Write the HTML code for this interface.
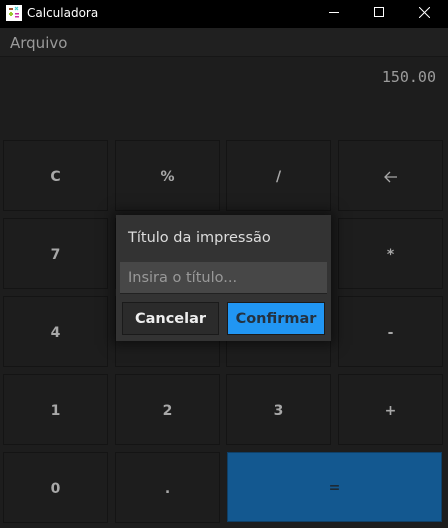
<!DOCTYPE html>
<html><head><style>
*{margin:0;padding:0;box-sizing:border-box}
body{width:448px;height:528px;background:#1d1d1d;font-family:"DejaVu Sans","Liberation Sans",sans-serif;position:relative;overflow:hidden}
.tb{position:absolute;left:0;top:0;width:448px;height:28px;background:#000;color:#fff;font-size:12px}
.menu{position:absolute;top:28px;left:0;width:448px;height:29px;background:#202020;border-bottom:1px solid #161616;color:#9a9a9a;font-size:15px;padding:6px 10px}
.disp{position:absolute;right:12px;top:68px;color:#9c9c9c;font-family:"DejaVu Sans Mono","Liberation Mono",monospace;font-size:15px}
.b{position:absolute;width:105px;height:71px;background:#1d1d1d;border:1px solid #141414;color:#a8a8a8;font-weight:bold;font-size:14px;display:flex;align-items:center;justify-content:center;padding-top:2px}
.dlg{position:absolute;left:116px;top:215px;width:215px;height:126px;background:#333;box-shadow:0 0 12px 4px rgba(0,0,0,.5)}
</style></head><body>
<div class="tb">
<svg style="position:absolute;left:6px;top:5px" width="16" height="16"><rect width="16" height="16" fill="#fff"/><rect x="3" y="3" width="4" height="2" fill="#a0522d"/><path d="M9 2l3 3M12 2l-3 3" stroke="#4cc" stroke-width="1.2"/><path d="M3 9h4M5 7v4" stroke="#9c3" stroke-width="2"/><rect x="9" y="8" width="4" height="1.5" fill="#c3a"/><rect x="9" y="11" width="4" height="1.5" fill="#c3a"/></svg>
<span style="position:absolute;left:27px;top:6px">Calculadora</span>
<div style="position:absolute;left:329px;top:12px;width:10px;height:1px;background:#fff"></div>
<div style="position:absolute;left:374px;top:7px;width:10px;height:10px;border:1px solid #fff"></div>
<svg style="position:absolute;left:419px;top:7px" width="11" height="11"><path d="M0 0L11 11M11 0L0 11" stroke="#fff" stroke-width="1"/></svg>
</div>
<div class="menu">Arquivo</div>
<div class="disp">150.00</div>
<div class="b" style="left:3px;top:140px">C</div>
<div class="b" style="left:115px;top:140px">%</div>
<div class="b" style="left:226px;top:140px">/</div>
<div class="b" style="left:338px;top:140px"><svg width="14" height="12"><path d="M13 6H1M6 1L1 6l5 5" stroke="#a8a8a8" stroke-width="1.3" fill="none"/></svg></div>
<div class="b" style="left:3px;top:218px">7</div>
<div class="b" style="left:115px;top:218px">8</div>
<div class="b" style="left:226px;top:218px">9</div>
<div class="b" style="left:338px;top:218px">*</div>
<div class="b" style="left:3px;top:296px">4</div>
<div class="b" style="left:115px;top:296px">5</div>
<div class="b" style="left:226px;top:296px">6</div>
<div class="b" style="left:338px;top:296px">-</div>
<div class="b" style="left:3px;top:374px">1</div>
<div class="b" style="left:115px;top:374px">2</div>
<div class="b" style="left:226px;top:374px">3</div>
<div class="b" style="left:338px;top:374px">+</div>
<div class="b" style="left:3px;top:452px">0</div>
<div class="b" style="left:115px;top:452px">.</div>
<div class="b" style="left:227px;top:452px;width:215px;height:70px;background:#135890;border-color:#0f3f66;color:#1d2a36">=</div>
<div class="dlg">
<div style="position:absolute;left:12px;top:15px;color:#ddd;font-size:14.5px">Título da impressão</div>
<div style="position:absolute;left:4px;top:47px;width:207px;height:32px;background:#474747;border-bottom:1px solid #222;color:#999;font-size:14.5px;padding:8px 8px">Insira o título...</div>
<div style="position:absolute;left:6px;top:87px;width:97px;height:33px;background:#2b2b2b;border:1px solid #1a1a1a;color:#eee;font-weight:bold;font-size:14.5px;display:flex;align-items:center;justify-content:center">Cancelar</div>
<div style="position:absolute;left:111px;top:87px;width:98px;height:33px;background:#2196f3;border:1px solid #1a1a1a;color:#233241;font-weight:bold;font-size:14.5px;display:flex;align-items:center;justify-content:center">Confirmar</div>
</div>
</body></html>
